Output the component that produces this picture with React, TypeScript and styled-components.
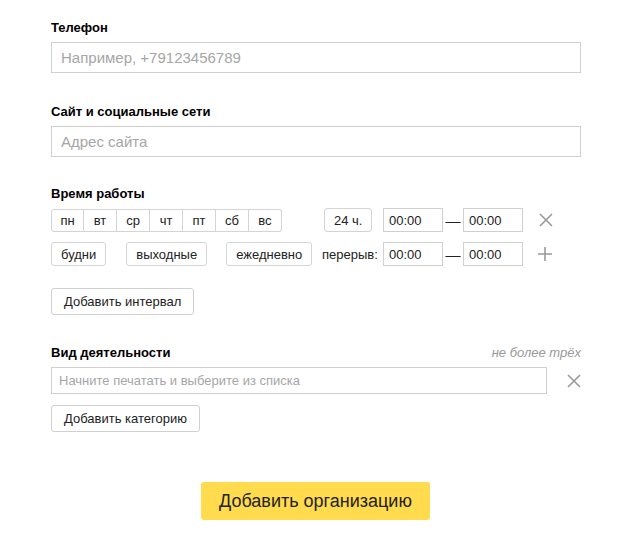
import React from "react";
import styled, { createGlobalStyle } from "styled-components";

const GlobalStyle = createGlobalStyle`
  html, body {
    margin: 0;
    padding: 0;
    background: #fff;
  }
  body {
    font-family: "Liberation Sans", Arial, sans-serif;
    color: #000;
  }
  * {
    box-sizing: border-box;
  }
`;

const Form = styled.div`
  width: 530px;
  margin-left: 51px;
  padding-top: 20px;
  display: flex;
  flex-direction: column;
`;

const Section = styled.div<{ $gap?: number }>`
  display: flex;
  flex-direction: column;
  margin-bottom: ${(p) => p.$gap ?? 31}px;
`;

const LabelRow = styled.div`
  display: flex;
  justify-content: space-between;
  align-items: baseline;
  margin-bottom: 6px;
`;

const Label = styled.div`
  font-size: 13px;
  line-height: 16px;
  font-weight: bold;
`;

const Hint = styled.div`
  font-size: 13px;
  font-style: italic;
  color: #999;
`;

const TextInput = styled.input<{ $small?: boolean }>`
  width: 100%;
  height: ${(p) => (p.$small ? 27 : 31)}px;
  border: 1px solid #d0d0d0;
  padding: 0 ${(p) => (p.$small ? 7 : 9)}px;
  font-family: inherit;
  font-size: ${(p) => (p.$small ? 13 : 15)}px;
  color: #000;
  outline: none;
  &::placeholder {
    color: #a6a6a6;
  }
`;

const HoursGrid = styled.div`
  display: grid;
  grid-template-columns: 271px 61px 60px 20px 60px auto;
  row-gap: 10px;
  align-items: center;
  margin-bottom: 22px;
`;

const DayGroup = styled.div`
  display: flex;
`;

const DayButton = styled.button`
  width: 33px;
  height: 23px;
  border: 1px solid #d4d4d4;
  border-left-width: 0;
  background: #fff;
  font-family: inherit;
  font-size: 13px;
  color: #222;
  padding: 0;
  &:first-child {
    border-left-width: 1px;
    border-radius: 3px 0 0 3px;
  }
  &:last-child {
    border-radius: 0 3px 3px 0;
  }
`;

const Presets = styled.div`
  display: flex;
  align-items: center;
  gap: 20px;
  & > :last-child {
    margin-left: -1px;
  }
`;

const SmallButton = styled.button<{ $offset?: number }>`
  height: 24px;
  padding: 0 9px;
  border: 1px solid #d4d4d4;
  border-radius: 3px;
  background: #fff;
  font-family: inherit;
  font-size: 13px;
  color: #222;
  justify-self: start;
  margin-left: ${(p) => p.$offset ?? 0}px;
`;

const ActionButton = styled.button`
  align-self: flex-start;
  height: 27px;
  padding: 0 12px;
  border: 1px solid #d0d0d0;
  border-radius: 3px;
  background: #fff;
  font-family: inherit;
  font-size: 13px;
  color: #222;
`;

const BreakLabel = styled.span`
  font-size: 13px;
  color: #222;
`;

const TimeInput = styled.input`
  width: 60px;
  height: 24px;
  border: 1px solid #d0d0d0;
  padding: 0 5px;
  font-family: inherit;
  font-size: 13px;
  color: #222;
  outline: none;
`;

const Dash = styled.span`
  font-size: 15px;
  text-align: center;
  color: #222;
`;

const IconButton = styled.span<{ $offset?: number }>`
  display: flex;
  align-items: center;
  margin-left: ${(p) => p.$offset ?? 14}px;
  color: #999;
`;

const CategoryRow = styled.div`
  display: flex;
  align-items: center;
  margin-bottom: 11px;
`;

const CategoryInputWrap = styled.div`
  width: 496px;
`;

const SubmitRow = styled.div`
  display: flex;
  justify-content: center;
  margin-top: 50px;
`;

const SubmitButton = styled.button`
  height: 38px;
  padding: 0 18px;
  border: none;
  border-radius: 3px;
  background: #ffdb4d;
  font-family: inherit;
  font-size: 18px;
  color: #222;
  margin-left: -1px;
`;

const CrossIcon = () => (
  <svg width="14" height="14" viewBox="0 0 14 14">
    <path d="M1 1L13 13M13 1L1 13" stroke="currentColor" strokeWidth="1.6" />
  </svg>
);

const PlusIcon = () => (
  <svg width="14" height="14" viewBox="0 0 14 14">
    <path d="M7 0V14M0 7H14" stroke="currentColor" strokeWidth="1.6" />
  </svg>
);

const days = ["пн", "вт", "ср", "чт", "пт", "сб", "вс"];

export default function App() {
  return (
    <>
      <GlobalStyle />
      <Form>
        <Section>
          <LabelRow>
            <Label>Телефон</Label>
          </LabelRow>
          <TextInput placeholder="Например, +79123456789" />
        </Section>

        <Section $gap={29}>
          <LabelRow>
            <Label>Сайт и социальные сети</Label>
          </LabelRow>
          <TextInput placeholder="Адрес сайта" />
        </Section>

        <Section $gap={30}>
          <LabelRow>
            <Label>Время работы</Label>
          </LabelRow>
          <HoursGrid>
            <DayGroup>
              {days.map((d) => (
                <DayButton key={d}>{d}</DayButton>
              ))}
            </DayGroup>
            <SmallButton $offset={2}>24 ч.</SmallButton>
            <TimeInput defaultValue="00:00" />
            <Dash>—</Dash>
            <TimeInput defaultValue="00:00" />
            <IconButton $offset={16}>
              <CrossIcon />
            </IconButton>

            <Presets>
              <SmallButton>будни</SmallButton>
              <SmallButton>выходные</SmallButton>
              <SmallButton>ежедневно</SmallButton>
            </Presets>
            <BreakLabel>перерыв:</BreakLabel>
            <TimeInput defaultValue="00:00" />
            <Dash>—</Dash>
            <TimeInput defaultValue="00:00" />
            <IconButton $offset={15}>
              <PlusIcon />
            </IconButton>
          </HoursGrid>
          <ActionButton>Добавить интервал</ActionButton>
        </Section>

        <Section $gap={0}>
          <LabelRow>
            <Label>Вид деятельности</Label>
            <Hint>не более трёх</Hint>
          </LabelRow>
          <CategoryRow>
            <CategoryInputWrap>
              <TextInput $small placeholder="Начните печатать и выберите из списка" />
            </CategoryInputWrap>
            <IconButton $offset={20}>
              <CrossIcon />
            </IconButton>
          </CategoryRow>
          <ActionButton>Добавить категорию</ActionButton>
        </Section>

        <SubmitRow>
          <SubmitButton>Добавить организацию</SubmitButton>
        </SubmitRow>
      </Form>
    </>
  );
}
